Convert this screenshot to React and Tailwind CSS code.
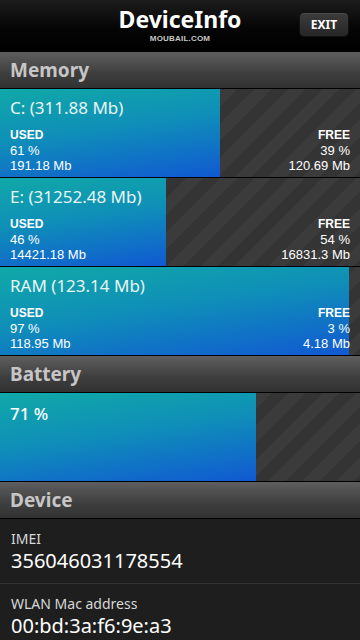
import React from 'react';

const memory = [
  { name: 'C: (311.88 Mb)', usedPct: 61, used: '191.18 Mb', freePct: 39, free: '120.69 Mb' },
  { name: 'E: (31252.48 Mb)', usedPct: 46, used: '14421.18 Mb', freePct: 54, free: '16831.3 Mb' },
  { name: 'RAM (123.14 Mb)', usedPct: 97, used: '118.95 Mb', freePct: 3, free: '4.18 Mb' },
];

const stripes =
  'bg-[repeating-linear-gradient(135deg,#343434_0px,#343434_12px,#3b3b3b_12px,#3b3b3b_24px)]';
const fill = 'bg-[linear-gradient(172deg,#10a9a7_0%,#0f8fb8_45%,#1159d2_100%)]';

const SectionHeader = ({ title }) => (
  <div className="h-[37px] flex items-center px-[10px] bg-[linear-gradient(#5e5e5e,#3e3e3e_60%,#323232)] border-b border-black">
    <span className="text-[19px] font-bold text-[#c6c6c6] leading-none">{title}</span>
  </div>
);

const Bar = ({ pct, children }) => (
  <div className={`relative h-[89px] border-b border-black ${stripes}`}>
    <div className={`absolute inset-y-0 left-0 ${fill}`} style={{ width: `${pct}%` }} />
    <div className="relative h-full">{children}</div>
  </div>
);

const MemoryBar = ({ item }) => (
  <Bar pct={item.usedPct}>
    <div className="px-[10px] pt-[8px] text-white">
      <div className="text-[17px] leading-[22px] text-[#e8f4f4]">{item.name}</div>
      <div className="flex justify-between mt-[9px] text-[13px] leading-[15px] font-['Liberation_Sans',sans-serif]">
        <div>
          <div className="font-bold text-[12px]">USED</div>
          <div>{item.usedPct} %</div>
          <div>{item.used}</div>
        </div>
        <div className="text-right">
          <div className="font-bold text-[12px]">FREE</div>
          <div>{item.freePct} %</div>
          <div>{item.free}</div>
        </div>
      </div>
    </div>
  </Bar>
);

const InfoRow = ({ label, value, last }) => (
  <div className={`px-[11px] pt-[10px] pb-[9px] ${last ? '' : 'border-b border-[#333]'}`}>
    <div className="text-[14px] leading-[19px] text-[#d8d8d8]">{label}</div>
    <div className="text-[20px] leading-[26px] text-white">{value}</div>
  </div>
);

export default function App() {
  return (
    <div className="w-[360px] h-[640px] overflow-hidden bg-[#1e1e1e] font-['Noto_Sans',sans-serif]">
      <div className="h-[52px] relative flex flex-col items-center pt-[4px] bg-[linear-gradient(#1c1c1c,#050505_55%,#000)]">
        <div className="text-[23px] font-bold text-white leading-[30px]">DeviceInfo</div>
        <div className="text-[8px] font-bold text-[#c8c8c8] leading-[9px] tracking-[0.2px] font-['Liberation_Sans',sans-serif]">MOUBAIL.COM</div>
        <button className="absolute right-[11px] top-[12px] w-[50px] h-[25px] rounded-[5px] bg-[linear-gradient(#3c3c3c,#262626)] border border-[#111] shadow-[inset_0_1px_0_#4a4a4a] text-[12px] font-bold text-white leading-none">
          EXIT
        </button>
      </div>

      <SectionHeader title="Memory" />
      {memory.map((m) => (
        <MemoryBar key={m.name} item={m} />
      ))}

      <SectionHeader title="Battery" />
      <Bar pct={71}>
        <div className="px-[10px] pt-[10px] text-[17px] leading-[22px] font-medium text-white">71 %</div>
      </Bar>

      <SectionHeader title="Device" />
      <InfoRow label="IMEI" value="356046031178554" />
      <InfoRow label="WLAN Mac address" value="00:bd:3a:f6:9e:a3" last />
    </div>
  );
}
